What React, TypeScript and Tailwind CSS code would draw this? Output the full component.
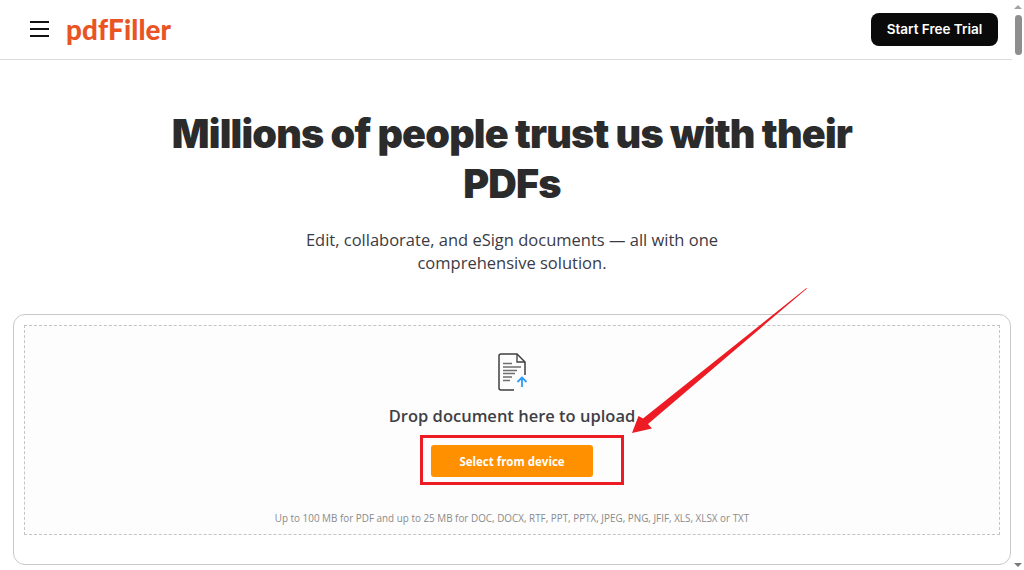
function FileUploadIcon() {
  return (
    <svg width="32" height="40" viewBox="0 0 32 40" fill="none">
      <path d="M18 38H5a2 2 0 0 1-2-2V4a2 2 0 0 1 2-2h16l8 8v13" stroke="#3f3f3f" strokeWidth="1.500" />
      <path d="M21 2v8h8" stroke="#3f3f3f" strokeWidth="1.300" />
      <path d="M7 11.500h9M7 15h18M7 18.500h14M7 21.500h12M7 25h9M7 28.500h7" stroke="#6f6f6f" strokeWidth="1.300" />
      <path d="M26 35V25.500M21.500 30l4.500-4.500 4.500 4.500" stroke="#2e9bf5" strokeWidth="1.800" />
    </svg>
  );
}

function MenuIcon() {
  return (
    <svg width="19" height="16" viewBox="0 0 19 16" fill="none">
      <path d="M0 1h19M0 8h19M0 15h19" stroke="#111" strokeWidth="1.800" />
    </svg>
  );
}

export default function App() {
  return (
    <div className="relative h-[570px] w-[1024px] overflow-hidden bg-white font-['Open_Sans',sans-serif]">
      {/* Header */}
      <header className="flex h-[60px] items-center justify-between border-b border-[#dcdcdc] pr-[26px] pl-[30px]">
        <div className="flex items-center gap-[17px]">
          <MenuIcon />
          <span className="font-['Lato',sans-serif] text-[27.800px] leading-none font-black tracking-[0.1px] text-[#ea5424]">pdfFiller</span>
        </div>
        <button className="h-[33px] w-[127px] rounded-lg bg-[#0a0a0a] font-['Inter',sans-serif] text-[13.500px] font-semibold text-white">
          Start Free Trial
        </button>
      </header>

      {/* Hero */}
      <main className="flex flex-col items-center">
        <h1 className="mt-[49px] w-[720px] text-center font-['Inter',sans-serif] text-[39.500px] leading-[50px] font-black tracking-[-0.8px] text-[#2b2b2b]">
          Millions of people trust us with their PDFs
        </h1>
        <p className="mt-[19px] w-[440px] text-center text-[16.500px] leading-[23px] text-[#3b3b45]">
          Edit, collaborate, and eSign documents — all with one comprehensive solution.
        </p>

        {/* Upload card */}
        <section className="mt-[40px] h-[251px] w-[998px] rounded-xl border border-[#c8c8c8] p-[10px]">
          <div className="flex h-[210px] flex-col items-center border border-dashed border-[#c4c4c4] bg-[#fdfdfd] pt-[26px]">
            <FileUploadIcon />
            <p className="mt-[12px] text-[16.500px] leading-[24px] font-semibold text-[#3f3f46]">Drop document here to upload</p>
            <button className="mt-[17px] h-[32px] w-[162px] rounded-[3px] bg-[#ff9100] pt-px text-[11.500px] font-bold text-white">
              Select from device
            </button>
            <p className="mt-[34px] text-[9.900px] leading-[14px] text-[#8a8a8a]">
              Up to 100 MB for PDF and up to 25 MB for DOC, DOCX, RTF, PPT, PPTX, JPEG, PNG, JFIF, XLS, XLSX or TXT
            </p>
          </div>
        </section>
      </main>

      {/* Scrollbar */}
      <div className="absolute top-0 right-0 bottom-0 flex w-[12px] flex-col items-center bg-white">
        <div className="mt-[5px] h-0 w-0 border-x-[4px] border-b-[4px] border-x-transparent border-b-[#a3a3a3]" />
        <div className="mt-[6px] h-[40px] w-[7px] rounded-full bg-[#8e8e8e]" />
        <div className="mt-auto mb-[3px] h-0 w-0 border-x-[4px] border-t-[4px] border-x-transparent border-t-[#7a7a7a]" />
      </div>

      {/* Red annotation */}
      <div className="absolute top-[435px] left-[420px] h-[50px] w-[204px] border-[3px] border-[#ed1c24]" />
      <svg className="absolute top-0 left-0" width="1024" height="570" viewBox="0 0 1024 570" fill="none">
        <polygon points="806.500,288 643,418.500 638.500,416 632,433 652,428.500 648,424 807,288.500" fill="#ed1c24" />
      </svg>
    </div>
  );
}
